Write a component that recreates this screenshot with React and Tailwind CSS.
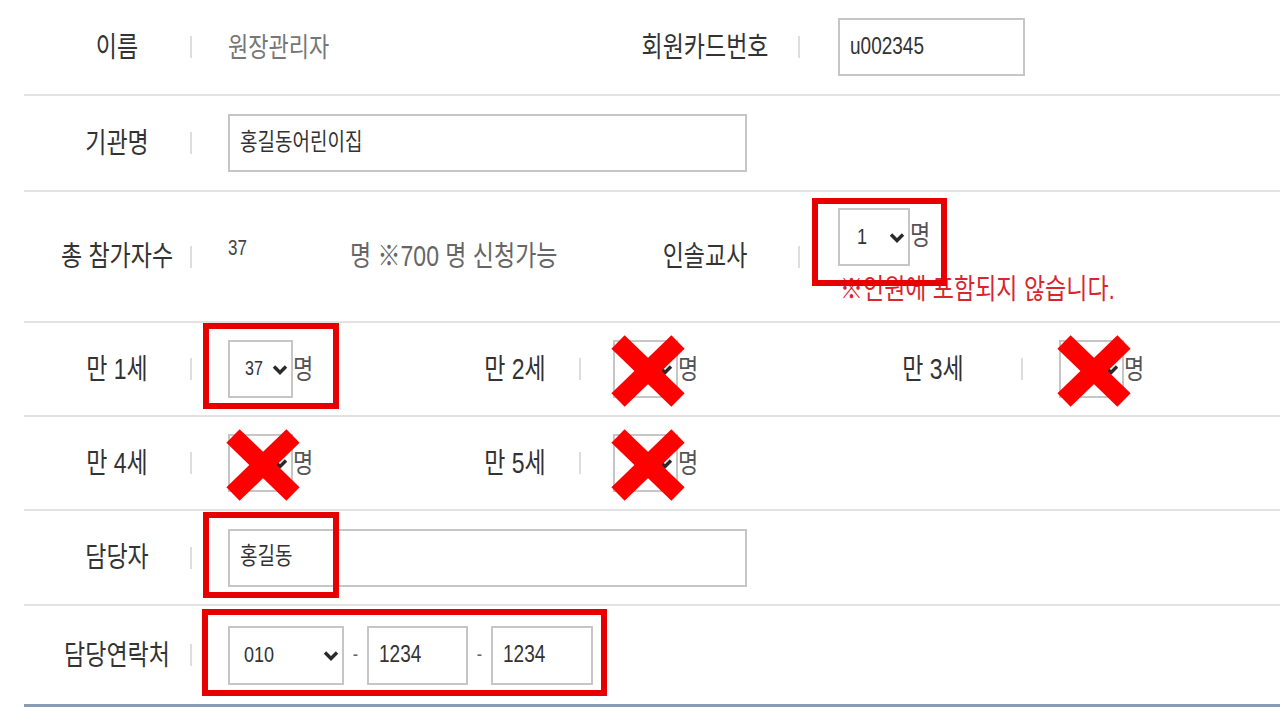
import React from "react";

function S({ children, className = "" }) {
  return <span className={"inline-block scale-y-125 whitespace-nowrap " + className}>{children}</span>;
}

function Label({ children, className = "" }) {
  return (
    <div className={"flex shrink-0 justify-center " + className}>
      <S className="text-[23px] text-[#333333]">{children}</S>
    </div>
  );
}

function Divider() {
  return <div className="h-[22px] w-[2px] shrink-0 bg-[#dddddd]" />;
}

function Chev() {
  return (
    <svg width="16" height="11" viewBox="0 0 16 11" className="shrink-0">
      <path d="M2 2.5 L8 8.5 L14 2.5" fill="none" stroke="#2a2a2a" strokeWidth="3.4" />
    </svg>
  );
}

function Sel({ value, className = "", textClass = "text-[18px]" }) {
  return (
    <div className={"flex h-[58px] shrink-0 items-center justify-between border-2 border-[#c6c6c6] bg-white pr-[3px] " + className}>
      <S className={"text-[#333333] " + textClass}>{value}</S>
      <Chev />
    </div>
  );
}

function Field({ value, className = "" }) {
  return (
    <div className={"flex h-[58px] shrink-0 items-center border-2 border-[#c6c6c6] bg-white pl-[10px] " + className}>
      <S className="text-[19px] text-[#333333]">{value}</S>
    </div>
  );
}

function Cross() {
  return (
    <svg width="74" height="72" viewBox="0 0 74 72" className="absolute -left-[2px] -top-[5px]">
      <line x1="7" y1="7" x2="67" y2="65" stroke="#ff0000" strokeWidth="19" />
      <line x1="67" y1="7" x2="7" y2="65" stroke="#ff0000" strokeWidth="19" />
    </svg>
  );
}

function Myeong() {
  return <S className="text-[22px] text-[#555555]">명</S>;
}

function AgeSel({ value = "", crossed = false }) {
  return (
    <div className="relative flex items-center">
      <Sel value={value} className="w-[65px] pl-[15px]" textClass="text-[16px]" />
      <Myeong />
      {crossed && <Cross />}
    </div>
  );
}

function RedBox({ className }) {
  return <div className={"pointer-events-none absolute border-[6px] border-[#e60000] " + className} />;
}

export default function App() {
  return (
    <div className="relative h-[720px] w-[1280px] overflow-hidden bg-white font-['Liberation_Sans','Noto_Sans_CJK_KR',sans-serif]">
      <div className="ml-[24px]">
        {/* 이름 */}
        <div className="flex h-[96px] items-center border-b-2 border-[#e2e2e2]">
          <Label className="w-[166px] pl-[20px]">이름</Label>
          <Divider />
          <div className="w-[420px] shrink-0 pl-[36px]">
            <S className="text-[22px] text-[#777777]">원장관리자</S>
          </div>
          <Label className="w-[186px]">회원카드번호</Label>
          <Divider />
          <div className="pl-[38px]">
            <Field value="u002345" className="h-[57px] w-[187px]" />
          </div>
        </div>

        {/* 기관명 */}
        <div className="flex h-[96px] items-center border-b-2 border-[#e2e2e2]">
          <Label className="w-[166px] pl-[20px]">기관명</Label>
          <Divider />
          <div className="pl-[36px]">
            <Field value="홍길동어린이집" className="w-[519px]" />
          </div>
        </div>

        {/* 총 참가자수 */}
        <div className="flex h-[131px] items-center border-b-2 border-[#e2e2e2]">
          <Label className="w-[166px] pl-[20px]">총 참가자수</Label>
          <Divider />
          <div className="flex w-[420px] shrink-0 items-center pl-[36px]">
            <div className="w-[122px] shrink-0 -translate-y-[8px]">
              <S className="text-[17px] text-[#444444]">37</S>
            </div>
            <S className="text-[23px] text-[#666666]">명 ※700 명 신청가능</S>
          </div>
          <Label className="w-[186px]">인솔교사</Label>
          <Divider />
          <div className="flex flex-col self-start pl-[38px] pt-[16px]">
            <div className="flex items-center">
              <Sel value="1" className="h-[57px] w-[72px] pl-[17px]" textClass="text-[18px]" />
              <S className="-translate-y-[2px] text-[22px] text-[#555555]">명</S>
            </div>
            <div className="mt-[6px] pl-[2px]">
              <S className="text-[23px] text-[#d8262f]">※인원에 포함되지 않습니다.</S>
            </div>
          </div>
        </div>

        {/* 만 1세 / 2세 / 3세 */}
        <div className="flex h-[94px] items-center border-b-2 border-[#e2e2e2]">
          <Label className="w-[166px] pl-[20px]">만 1세</Label>
          <Divider />
          <div className="w-[259px] shrink-0 pl-[36px]">
            <AgeSel value="37" />
          </div>
          <Label className="w-[128px]">만 2세</Label>
          <Divider />
          <div className="w-[264px] shrink-0 pl-[32px]">
            <AgeSel crossed />
          </div>
          <Label className="w-[176px]">만 3세</Label>
          <Divider />
          <div className="pl-[36px]">
            <AgeSel crossed />
          </div>
        </div>

        {/* 만 4세 / 5세 */}
        <div className="flex h-[94px] items-center border-b-2 border-[#e2e2e2]">
          <Label className="w-[166px] pl-[20px]">만 4세</Label>
          <Divider />
          <div className="w-[259px] shrink-0 pl-[36px]">
            <AgeSel crossed />
          </div>
          <Label className="w-[128px]">만 5세</Label>
          <Divider />
          <div className="w-[264px] shrink-0 pl-[32px]">
            <AgeSel crossed />
          </div>
        </div>

        {/* 담당자 */}
        <div className="flex h-[95px] items-center border-b-2 border-[#e2e2e2]">
          <Label className="w-[166px] pl-[20px]">담당자</Label>
          <Divider />
          <div className="pl-[36px]">
            <Field value="홍길동" className="w-[519px]" />
          </div>
        </div>

        {/* 담당연락처 */}
        <div className="flex h-[101px] items-center border-b-[3px] border-[#8a9cb5]">
          <Label className="w-[166px] pl-[20px]">담당연락처</Label>
          <Divider />
          <div className="flex items-center pl-[36px]">
            <Sel value="010" className="h-[59px] w-[116px] pl-[14px]" textClass="text-[18px]" />
            <div className="flex w-[23px] justify-center">
              <S className="text-[16px] text-[#666666]">-</S>
            </div>
            <Field value="1234" className="h-[59px] w-[101px]" />
            <div className="flex w-[23px] justify-center">
              <S className="text-[16px] text-[#666666]">-</S>
            </div>
            <Field value="1234" className="h-[59px] w-[102px]" />
          </div>
        </div>
      </div>

      <RedBox className="left-[812px] top-[198px] h-[88px] w-[135px]" />
      <RedBox className="left-[203px] top-[323px] h-[86px] w-[136px]" />
      <RedBox className="left-[203px] top-[512px] h-[86px] w-[136px]" />
      <RedBox className="left-[202px] top-[609px] h-[87px] w-[405px]" />
    </div>
  );
}
